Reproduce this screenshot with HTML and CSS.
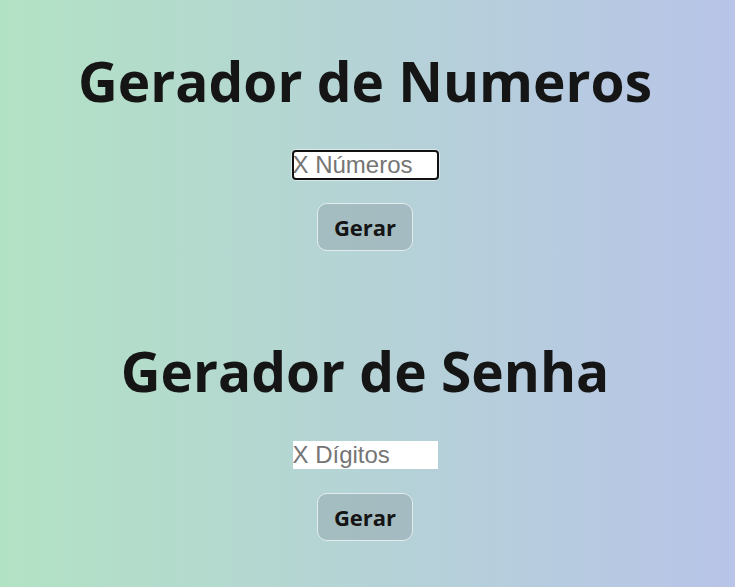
FILE: index.html
```html
<!DOCTYPE html>
<html lang="pt">
<head>
<meta charset="utf-8">
<title>Gerador</title>
<link rel="stylesheet" href="styles.css">
</head>
<body>
<main class="page">
  <section class="gen">
    <h1 class="title">Gerador de Numeros</h1>
    <input class="field field-focus" type="text" placeholder="X Números">
    <button class="btn">Gerar</button>
  </section>
  <section class="gen gen-second">
    <h1 class="title">Gerador de Senha</h1>
    <input class="field" type="text" placeholder="X Dígitos">
    <button class="btn">Gerar</button>
  </section>
</main>
</body>
</html>
```
FILE: styles.css
```css
html, body {
  margin: 0;
  padding: 0;
  height: 100%;
}
body {
  background: linear-gradient(to right, #b2e2c4, #b8c4e8);
  font-family: "Open Sans", sans-serif;
  color: #151515;
}
.page {
  display: flex;
  flex-direction: column;
  align-items: center;
  padding-top: 41px;
  padding-right: 5px;
}
.gen {
  display: flex;
  flex-direction: column;
  align-items: center;
}
.gen-second {
  margin-top: 80px;
}
.title {
  margin: 0 0 30px;
  font-size: 55px;
  font-weight: 700;
  line-height: 80px;
  letter-spacing: 0;
}
.field {
  box-sizing: border-box;
  width: 145px;
  height: 28px;
  padding: 0;
  border: none;
  border-radius: 0;
  background: #fff;
  font-family: "Liberation Sans", Arial, sans-serif;
  font-size: 24px;
  color: #111;
  outline: none;
}
.field::placeholder {
  color: #757575;
}
.field-focus {
  border-radius: 3px;
  outline: 2px solid #111;
  outline-offset: -1px;
  box-shadow: 0 0 0 2px rgba(255, 255, 255, 0.5);
}
.btn {
  box-sizing: border-box;
  margin-top: 24px;
  width: 96px;
  height: 48px;
  padding-bottom: 2px;
  border: 1px solid #e2ecef;
  border-radius: 10px;
  background: rgba(150, 170, 175, 0.55);
  font-family: "Open Sans", sans-serif;
  font-weight: 700;
  font-size: 22px;
  color: #151515;
}
```
